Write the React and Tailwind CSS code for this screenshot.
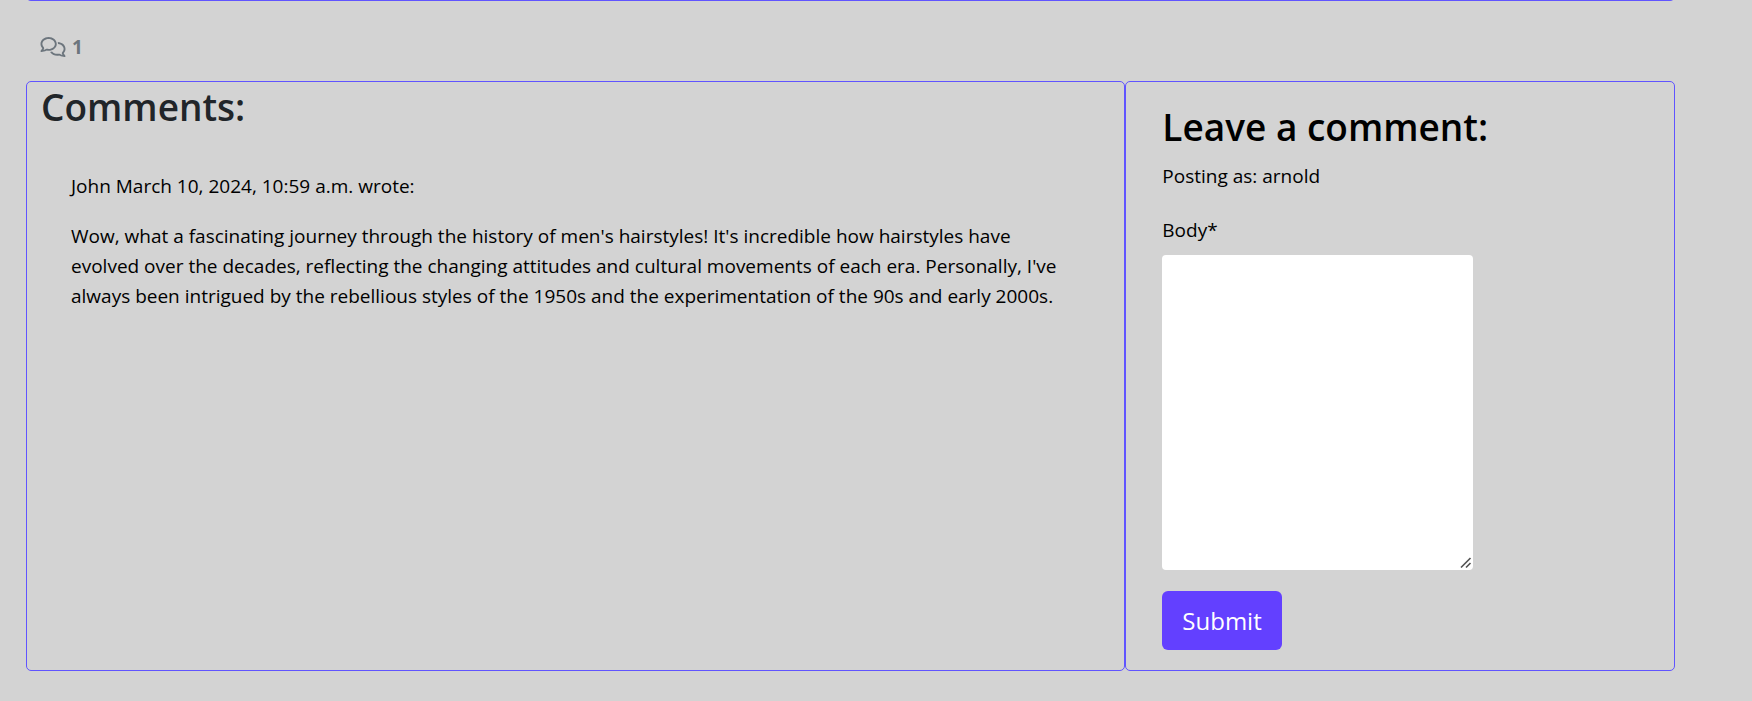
import { FaRegComments } from "react-icons/fa6";

export default function App() {
  return (
    <div className="min-h-screen bg-[#d3d3d3] pr-[77px] pb-[30px] pl-[26px] font-['Open_Sans','Noto_Sans',sans-serif] text-[19px] leading-[30px] text-black">
      <div className="-mt-2 h-[9px] rounded-b-[5px] border border-t-0 border-[#6054ff]" />
      <div className="flex h-20 items-center gap-[6px] px-[14px] pt-3 font-bold text-[#6c757d]">
        <FaRegComments className="h-5 w-[26px]" aria-hidden="true" />
        <span>1</span>
      </div>
      <main className="grid grid-cols-[2fr_1fr]">
        <section className="rounded-[5px] border border-[#6054ff] px-[14px]">
          <h2 className="text-[37px] leading-[50px] font-semibold text-[#212529]">Comments:</h2>
          <article className="px-[30px] pt-[39px]">
            <p>John March 10, 2024, 10:59 a.m. wrote:</p>
            <p className="mt-5">
              Wow, what a fascinating journey through the history of men's hairstyles! It's incredible how hairstyles
              have evolved over the decades, reflecting the changing attitudes and cultural movements of each era.
              Personally, I've always been intrigued by the rebellious styles of the 1950s and the experimentation of
              the 90s and early 2000s.
            </p>
          </article>
        </section>
        <section className="rounded-[5px] border border-[#6054ff] px-9 pt-5 pb-5">
          <h2 className="text-[37px] leading-[50px] font-semibold">Leave a comment:</h2>
          <p className="mt-[9px]">Posting as: arnold</p>
          <form className="flex flex-col items-start pt-6" onSubmit={(e) => e.preventDefault()}>
            <label htmlFor="body">Body*</label>
            <div className="relative mt-[10px] flex">
              <textarea
                id="body"
                name="body"
                required
                className="h-[315px] w-[311px] max-w-full resize rounded-[4px] bg-white p-2 outline-none"
              />
              <svg
                className="pointer-events-none absolute right-px bottom-px h-3 w-3 bg-white"
                viewBox="0 0 12 12"
                fill="none"
                stroke="#555"
                strokeWidth="1.7"
                aria-hidden="true"
              >
                <path d="M1 10.5L10.5 1M6 10.5L10.5 6" />
              </svg>
            </div>
            <button
              type="submit"
              className="mt-[21px] rounded-[6px] bg-[#6340ff] px-5 py-[11px] text-2xl leading-[37px] text-white"
            >
              Submit
            </button>
          </form>
        </section>
      </main>
    </div>
  );
}
